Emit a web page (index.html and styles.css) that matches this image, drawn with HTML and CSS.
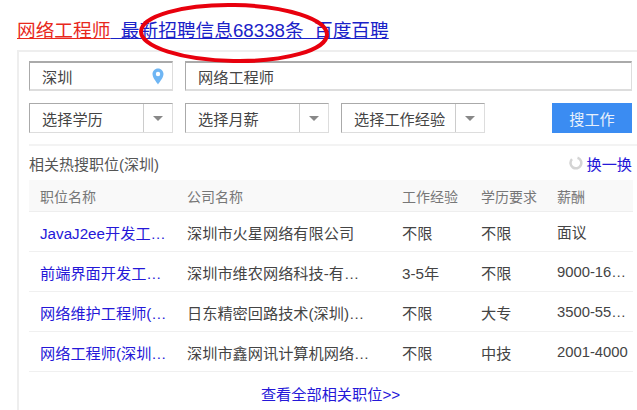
FILE: index.html
```html
<!DOCTYPE html>
<html lang="zh">
<head>
  <meta charset="UTF-8">
  <title>网络工程师 最新招聘信息</title>
  <link rel="stylesheet" href="styles.css">
</head>
<body>

  <!-- heading -->
  <h1 class="headline">
    <a class="key" href="#">网络工程师</a><a class="rest" href="#">&nbsp;&nbsp;最新招聘信息68338条&nbsp;&nbsp;百度百聘</a>
  </h1>

  <div class="card">
    <!-- search form -->
    <div class="form-row">
      <div class="field city">
        <span class="field-text">深圳</span>
        <svg class="pin" width="12" height="17" viewBox="0 0 12 17"><path d="M6 0.5C2.8 0.5 0.5 3 0.5 6c0 3.6 3.6 7.6 5.5 10.5C7.900 13.600 11.500 9.600 11.500 6 11.500 3 9.200 0.500 6 0.500z" fill="#6fb6f4"/><circle cx="6" cy="6" r="2.200" fill="#fff"/></svg>
      </div>
      <div class="field job"><span class="field-text">网络工程师</span></div>
    </div>
    <div class="form-row second">
      <div class="select"><span class="select-text">选择学历</span><span class="arrow"></span></div>
      <div class="select"><span class="select-text">选择月薪</span><span class="arrow"></span></div>
      <div class="select"><span class="select-text">选择工作经验</span><span class="arrow"></span></div>
      <button class="search-btn">搜工作</button>
    </div>

    <div class="divider"></div>

    <!-- hot jobs -->
    <div class="hot-head">
      <span class="hot-title">相关热搜职位(深圳)</span>
      <span class="refresh">
        <svg width="14" height="14" viewBox="0 0 14 14"><path d="M8.500 1.800A5.400 5.400 0 1 1 3 3.200" fill="none" stroke="#d4d4d4" stroke-width="2.500"/></svg>
        <a href="#">换一换</a>
      </span>
    </div>

    <table class="jobs">
      <thead>
        <tr><th class="c-name">职位名称</th><th class="c-company">公司名称</th><th class="c-exp">工作经验</th><th class="c-edu">学历要求</th><th>薪酬</th></tr>
      </thead>
      <tbody>
        <tr><td><a href="#">JavaJ2ee开发工…</a></td><td>深圳市火星网络有限公司</td><td>不限</td><td>不限</td><td>面议</td></tr>
        <tr><td><a href="#">前端界面开发工…</a></td><td>深圳市维农网络科技-有…</td><td>3-5年</td><td>不限</td><td>9000-16…</td></tr>
        <tr><td><a href="#">网络维护工程师(…</a></td><td>日东精密回路技术(深圳)…</td><td>不限</td><td>大专</td><td>3500-55…</td></tr>
        <tr><td><a href="#">网络工程师(深圳…</a></td><td>深圳市鑫网讯计算机网络…</td><td>不限</td><td>中技</td><td>2001-4000</td></tr>
      </tbody>
    </table>

    <div class="more"><a href="#">查看全部相关职位&gt;&gt;</a></div>
  </div>

  <!-- red hand-drawn circle over the heading -->
  <svg class="scribble" width="210" height="70" viewBox="0 0 210 70"><ellipse cx="104" cy="33" rx="93" ry="28" fill="none" stroke="#e8000d" stroke-width="4" transform="rotate(1 104 33)"/></svg>

</body>
</html>
```

FILE: styles.css
```css
html, body {
  height: 410px;
  overflow: hidden;
}

body {
  margin: 0;
  padding: 20px 0 0 17px;
  position: relative;
  background: #fff;
  font-family: 'Liberation Sans', 'Noto Sans CJK SC', sans-serif;
  color: #444;
}

a {
  color: #2518d8;
  text-decoration: none;
}

.headline {
  margin: 0 0 9px;
  height: 21px;
  font-size: 18.700px;
  line-height: 21px;
  font-weight: normal;
  white-space: nowrap;
}

.headline a {
  text-decoration: underline;
}

.headline .key {
  color: #e8281c;
}

.headline .rest {
  color: #1a22c8;
}

.card {
  border-top: 2px solid #eee;
  border-left: 2px solid #eee;
  padding: 9px 5px 0 10px;
  height: 350px;
}

.form-row {
  display: flex;
  height: 30px;
}

.form-row.second {
  margin-top: 12px;
}

.field, .select {
  box-sizing: border-box;
  height: 30px;
  width: 144px;
  margin-right: 12px;
  border: 1px solid #ddd;
  border-top: 1px solid #aaa;
  border-left: 1px solid #aaa;
  display: flex;
  align-items: center;
  font-size: 15.200px;
  color: #444;
}

.field {
  border-top-width: 2px;
  border-bottom-width: 2px;
}

.field.job {
  flex: 1;
  margin-right: 0;
}

.field-text {
  padding-left: 12px;
  flex: 1;
}

.pin {
  margin-right: 8px;
}

.select-text {
  flex: 1;
  padding-left: 12px;
  white-space: nowrap;
}

.arrow {
  width: 28px;
  height: 100%;
  border-left: 1px solid #ccc;
  display: flex;
  align-items: center;
  justify-content: center;
}

.arrow::after {
  content: '';
  border-top: 5px solid #888;
  border-left: 5px solid transparent;
  border-right: 5px solid transparent;
}

.search-btn {
  margin-left: auto;
  width: 80px;
  height: 30px;
  border: 0;
  background: #3b8cf2;
  color: #e8f0fb;
  font-family: inherit;
  font-size: 15.200px;
  padding: 0;
}

.divider {
  height: 2px;
  background: #f3f3f3;
  margin: 11px -5px 0 0;
}

.hot-head {
  display: flex;
  justify-content: space-between;
  align-items: center;
  height: 34px;
  font-size: 15px;
  color: #555;
}

.refresh {
  display: flex;
  align-items: center;
  gap: 3px;
  font-size: 15.200px;
}

.jobs {
  width: 604px;
  table-layout: fixed;
  border-collapse: collapse;
  font-size: 15.200px;
}

.jobs th {
  height: 31px;
  padding: 0 0 0 11px;
  background: #f9f9f9;
  border-bottom: 1px solid #eee;
  font-size: 14px;
  font-weight: normal;
  text-align: left;
  color: #777;
}

.jobs td {
  height: 39px;
  padding: 0 0 0 11px;
  border-bottom: 1px solid #f0f0f0;
  white-space: nowrap;
  overflow: hidden;
}

.jobs td:last-child {
  font-size: 14.800px;
}

.jobs .c-name { width: 136px; }
.jobs .c-company { width: 204px; }
.jobs .c-exp { width: 68px; }
.jobs .c-edu { width: 65px; }

.more {
  text-align: center;
  font-size: 15.200px;
  margin-top: 10px;
}

.scribble {
  position: absolute;
  left: 130px;
  top: 0;
}
```
